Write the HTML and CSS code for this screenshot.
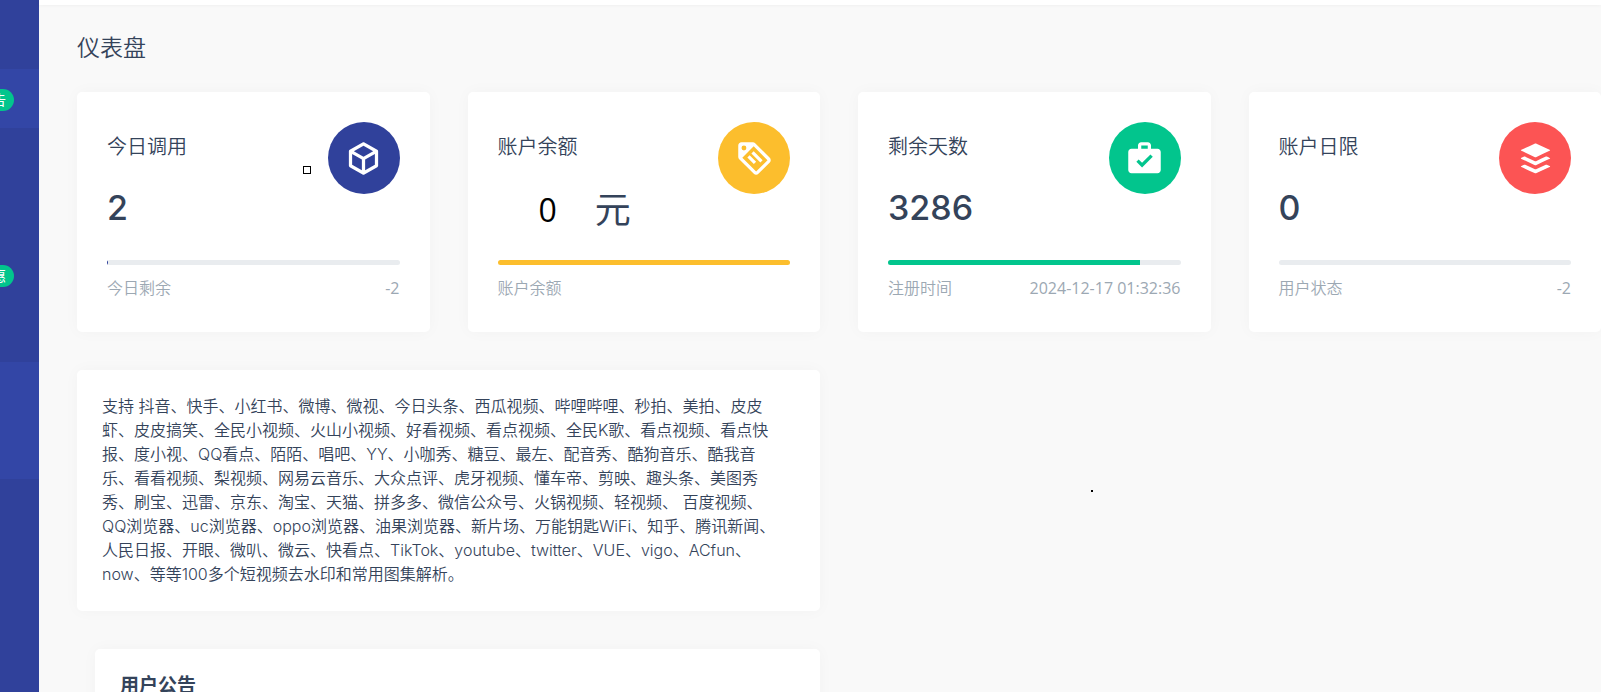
FILE: index.html
```html
<!DOCTYPE html>
<html lang="zh-CN">
<head>
<meta charset="utf-8">
<meta name="viewport" content="width=device-width, initial-scale=1">
<title>仪表盘</title>
<link rel="stylesheet" href="styles.css">
</head>
<body>
<div class="layout">
  <nav class="sidebar" aria-label="主菜单">
    <div class="nav-group">
      <a class="nav-item nav-item--active" href="#notice"><span class="badge">告</span></a>
      <a class="nav-item" href="#a" aria-label="菜单"></a>
      <a class="nav-item" href="#b" aria-label="菜单"></a>
      <a class="nav-item" href="#offer"><span class="badge">惠</span></a>
      <a class="nav-item" href="#c" aria-label="菜单"></a>
    </div>
    <a class="nav-item nav-item--open" href="#d" aria-label="菜单"></a>
  </nav>
  <div class="page">
    <header class="topbar"></header>
    <main class="content">
      <h1 class="page-title">仪表盘</h1>
      <div class="grid">
        <section class="card stat">
          <div class="stat-head">
            <div>
              <h2 class="stat-label">今日调用</h2>
              <p class="stat-value">2</p>
            </div>
            <span class="stat-icon stat-icon--blue"><svg class="icon" viewBox="0 0 24 24" aria-hidden="true"><path d="M21,16.5C21,16.88 20.79,17.21 20.47,17.38L12.57,21.82C12.41,21.94 12.21,22 12,22C11.79,22 11.59,21.94 11.43,21.82L3.53,17.38C3.21,17.21 3,16.88 3,16.5V7.5C3,7.12 3.21,6.79 3.53,6.62L11.43,2.18C11.59,2.06 11.79,2 12,2C12.21,2 12.41,2.06 12.57,2.18L20.47,6.62C20.79,6.79 21,7.12 21,7.5V16.5M12,4.15L6.04,7.5L12,10.85L17.96,7.5L12,4.15M5,15.91L11,19.29V12.58L5,9.21V15.91M19,15.91V9.21L13,12.58V19.29L19,15.91Z"/></svg></span>
          </div>
          <div class="bar"><div class="bar-fill bar-fill--blue" style="width:0.4%"></div></div>
          <div class="stat-foot"><span>今日剩余</span><span>-2</span></div>
          <span class="marker"></span>
        </section>
        <section class="card stat">
          <div class="stat-head">
            <div>
              <h2 class="stat-label">账户余额</h2>
              <p class="stat-value stat-value--balance"><span class="amount">0</span><span>元</span></p>
            </div>
            <span class="stat-icon stat-icon--yellow"><svg class="icon" viewBox="0 0 24 24" aria-hidden="true"><path d="M5.5,7A1.5,1.5 0 0,0 7,5.5A1.5,1.5 0 0,0 5.5,4A1.5,1.5 0 0,0 4,5.5A1.5,1.5 0 0,0 5.5,7M21.41,11.58C21.77,11.94 22,12.44 22,13C22,13.55 21.78,14.05 21.41,14.41L14.41,21.41C14.05,21.77 13.55,22 13,22C12.45,22 11.95,21.77 11.58,21.41L2.59,12.41C2.22,12.05 2,11.55 2,11V4C2,2.89 2.89,2 4,2H11C11.55,2 12.05,2.22 12.41,2.58L21.41,11.58M13,20L20,13L11.5,4.5L4.5,11.5L13,20M10.09,8.91L11.5,7.5L17,13L15.59,14.41L10.09,8.91M7.59,11.41L9,10L13,14L11.59,15.41L7.59,11.41Z"/></svg></span>
          </div>
          <div class="bar"><div class="bar-fill bar-fill--yellow" style="width:100%"></div></div>
          <div class="stat-foot"><span>账户余额</span></div>
        </section>
        <section class="card stat">
          <div class="stat-head">
            <div>
              <h2 class="stat-label">剩余天数</h2>
              <p class="stat-value">3286</p>
            </div>
            <span class="stat-icon stat-icon--green"><svg class="icon" viewBox="0 0 24 24" aria-hidden="true"><path d="M10.5,17.5L7,14L8.41,12.59L10.5,14.67L15.68,9.5L17.09,10.91L10.5,17.5M10,4V6H14V4H10M14,2C15.11,2 16,2.9 16,4V6H20C21.1,6 22,6.89 22,8V19C22,20.1 21.1,21 20,21H4C2.89,21 2,20.1 2,19V8C2,6.89 2.89,6 4,6H8V4C8,2.9 8.89,2 10,2H14Z"/></svg></span>
          </div>
          <div class="bar"><div class="bar-fill bar-fill--green" style="width:86%"></div></div>
          <div class="stat-foot"><span>注册时间</span><span>2024-12-17 01:32:36</span></div>
        </section>
        <section class="card stat">
          <div class="stat-head">
            <div>
              <h2 class="stat-label">账户日限</h2>
              <p class="stat-value">0</p>
            </div>
            <span class="stat-icon stat-icon--red"><svg class="icon" viewBox="0 0 24 24" aria-hidden="true"><path d="M12.6,2.86C15.27,4.1 18,5.39 20.66,6.63C20.81,6.7 21,6.75 21,6.95C21,7.15 20.81,7.19 20.66,7.26C18,8.5 15.3,9.77 12.62,11C12.21,11.21 11.79,11.21 11.38,11C8.69,9.76 6,8.5 3.32,7.25C3.18,7.19 3,7.14 3,6.94C3,6.76 3.18,6.71 3.31,6.65C6,5.39 8.74,4.1 11.44,2.85C11.73,2.72 12.3,2.73 12.6,2.86M12,21.15C11.8,21.15 11.66,21.07 11.38,20.97C8.69,19.73 6,18.47 3.33,17.22C3.19,17.15 3,17.11 3,16.9C3,16.7 3.19,16.66 3.34,16.59C3.78,16.38 4.23,16.17 4.67,15.96C5.12,15.76 5.56,15.76 6,15.97C7.79,16.8 9.57,17.63 11.35,18.46C11.79,18.67 12.23,18.66 12.67,18.46C14.45,17.62 16.23,16.79 18,15.96C18.44,15.76 18.87,15.75 19.29,15.95C19.77,16.16 20.24,16.39 20.71,16.61C20.78,16.64 20.85,16.68 20.91,16.73C21.04,16.83 21.04,17 20.91,17.08C20.83,17.14 20.74,17.19 20.65,17.23C18,18.5 15.33,19.72 12.66,20.95C12.46,21.05 12.19,21.15 12,21.15M12,16.17C11.9,16.17 11.55,16.07 11.36,16C8.68,14.74 6,13.5 3.34,12.24C3.2,12.18 3,12.13 3,11.93C3,11.72 3.2,11.68 3.35,11.61C3.8,11.39 4.25,11.18 4.7,10.97C5.13,10.78 5.56,10.78 6,11C7.78,11.82 9.58,12.66 11.38,13.5C11.79,13.69 12.21,13.69 12.63,13.5C14.43,12.65 16.23,11.81 18.04,10.97C18.45,10.78 18.87,10.78 19.29,10.97C19.76,11.19 20.24,11.41 20.71,11.63C20.77,11.66 20.84,11.69 20.9,11.74C21.04,11.85 21.04,12 20.89,12.12C20.84,12.16 20.77,12.19 20.71,12.22C18,13.5 15.31,14.75 12.61,16C12.42,16.09 12.08,16.17 12,16.17Z"/></svg></span>
          </div>
          <div class="bar"></div>
          <div class="stat-foot"><span>用户状态</span><span>-2</span></div>
        </section>
        <section class="card support">
          <p class="support-text">支持 抖音、快手、小红书、微博、微视、今日头条、西瓜视频、哔哩哔哩、秒拍、美拍、皮皮<br>虾、皮皮搞笑、全民小视频、火山小视频、好看视频、看点视频、全民K歌、看点视频、看点快<br>报、度小视、QQ看点、陌陌、唱吧、YY、小咖秀、糖豆、最左、配音秀、酷狗音乐、酷我音<br>乐、看看视频、梨视频、网易云音乐、大众点评、虎牙视频、懂车帝、剪映、趣头条、美图秀<br>秀、刷宝、迅雷、京东、淘宝、天猫、拼多多、微信公众号、火锅视频、轻视频、 百度视频、<br>QQ浏览器、uc浏览器、oppo浏览器、油果浏览器、新片场、万能钥匙WiFi、知乎、腾讯新闻、<br>人民日报、开眼、微叭、微云、快看点、TikTok、youtube、twitter、VUE、vigo、ACfun、<br>now、等等100多个短视频去水印和常用图集解析。</p>
        </section>
        <div class="side"><span class="dot"></span></div>
        <section class="card notice" id="notice">
          <h2 class="notice-title">用户公告</h2>
        </section>
      </div>
    </main>
  </div>
</div>
</body>
</html>
```

FILE: styles.css
```css
* {
  box-sizing: border-box;
}

body {
  margin: 0;
  background: #f9f9f9;
  color: #34435a;
  font-family: "Open Sans", "Noto Sans CJK SC", sans-serif;
  font-size: 16px;
  line-height: 24px;
}

h1, h2, p {
  margin: 0;
}

.layout {
  display: flex;
  height: 100vh;
  overflow: hidden;
}

.sidebar {
  flex: 0 0 39px;
  padding-top: 69px;
  background: #30419b;
  overflow: hidden;
}

.nav-group {
  display: grid;
  grid-template-rows: repeat(5, 1fr);
  height: 293px;
}

.nav-item {
  display: flex;
  align-items: center;
  padding-top: 3px;
  color: #fff;
  text-decoration: none;
}

.nav-item--active,
.nav-item--open {
  background: #3346a6;
}

.nav-item--open {
  height: 117px;
}

.badge {
  margin-left: -16px;
  padding: 0 8px;
  border-radius: 11px;
  background: #02c58d;
  font-size: 14px;
  line-height: 22px;
}

.page {
  flex: 1;
  min-width: 0;
}

.topbar {
  height: 5px;
  background: #fff;
  box-shadow: 0 0 4px rgba(0, 0, 0, 0.06);
}

.content {
  padding: 26px 0 0 38px;
}

.page-title {
  margin-bottom: 29px;
  font-size: 23px;
  font-weight: 350;
  line-height: 32px;
}

.grid {
  display: grid;
  grid-template-columns: repeat(4, minmax(0, 1fr));
  gap: 38px;
}

.card {
  border-radius: 5px;
  background: #fff;
  box-shadow: 0 0 16px rgba(0, 0, 0, 0.03);
}

.stat {
  position: relative;
  padding: 30px 30px 31px;
}

.stat-head {
  display: flex;
  justify-content: space-between;
}

.stat-label {
  margin: 13px 0 25px;
  font-size: 20px;
  font-weight: 350;
  line-height: 24px;
}

.stat-value {
  font-family: Inter, "Noto Sans CJK SC", sans-serif;
  font-size: 34px;
  font-weight: 500;
  line-height: 48px;
}

.stat-value--balance {
  display: flex;
  gap: 38px;
  padding: 4px 0 0 41px;
  font-family: "Open Sans", "Noto Sans CJK SC", sans-serif;
  font-size: 36px;
  font-weight: 400;
  line-height: 44px;
}

.amount {
  color: #000;
  font-size: 32px;
}

.stat-icon {
  display: flex;
  align-items: center;
  justify-content: center;
  width: 72px;
  height: 72px;
  border-radius: 50%;
}

.stat-icon--blue, .bar-fill--blue { background: #30419b; }
.stat-icon--yellow, .bar-fill--yellow { background: #fcbe2d; }
.stat-icon--green, .bar-fill--green { background: #02c58d; }
.stat-icon--red { background: #fc5454; }

.icon {
  width: 39px;
  height: 39px;
  fill: #fff;
  fill-rule: evenodd;
}

.bar {
  height: 5px;
  margin: 28px 0 10px;
  border-radius: 3px;
  background: #e9ecef;
  overflow: hidden;
}

.bar-fill {
  height: 100%;
}

.stat-foot {
  display: flex;
  justify-content: space-between;
  color: #9ca8b3;
  line-height: 26px;
}

.stat-foot span:first-child {
  font-weight: 350;
}

.marker {
  position: absolute;
  top: 74px;
  right: 119px;
  width: 8px;
  height: 8px;
  border: 1px solid #000;
}

.support {
  grid-column: span 2;
  padding: 24px 25px 25px;
}

.support-text {
  font-family: Inter, "Noto Sans CJK SC", sans-serif;
  font-weight: 350;
  white-space: nowrap;
}

.side {
  display: flex;
  grid-column: span 2;
  align-items: center;
  justify-content: center;
}

.dot {
  width: 2px;
  height: 2px;
  margin-right: 276px;
  background: #000;
}

.notice {
  grid-column: 1 / span 2;
  min-height: 200px;
  margin-left: 18px;
  padding: 24px 25px;
}

.notice-title {
  font-size: 19px;
  font-weight: 700;
  line-height: 24px;
}
```
